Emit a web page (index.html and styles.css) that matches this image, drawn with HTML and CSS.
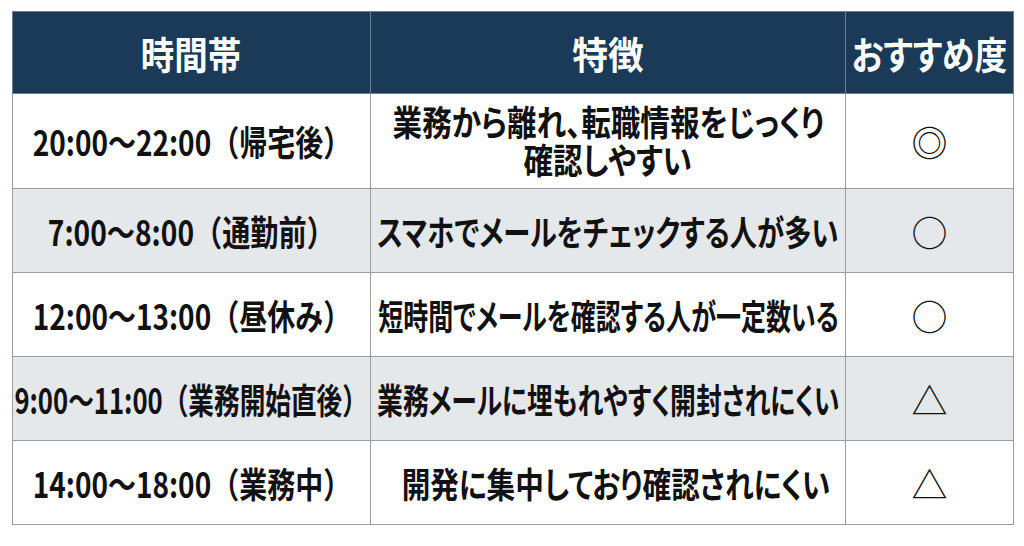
FILE: index.html
```html
<!DOCTYPE html>
<html lang="ja">
<head>
<meta charset="utf-8">
<link rel="stylesheet" href="styles.css">
</head>
<body>
<table class="tbl">
  <colgroup>
    <col class="c1"><col class="c2"><col class="c3">
  </colgroup>
  <thead>
    <tr>
      <th><div class="fit"><span class="tx" style="--sx:0.88">時間帯</span></div></th>
      <th><div class="fit"><span class="tx" style="--sx:0.94">特徴</span></div></th>
      <th><div class="fit"><span class="tx" style="--sx:0.86">おすすめ度</span></div></th>
    </tr>
  </thead>
  <tbody>
    <tr class="r1">
      <td class="time"><div class="fit"><span class="tx" style="--sx:0.80">20:00〜22:00（帰宅後）</span></div></td>
      <td class="desc"><div class="fit stack"><span class="tx ln" style="--sx:0.845">業務から離れ、転職情報をじっくり</span><span class="tx ln" style="--sx:0.845">確認しやすい</span></div></td>
      <td class="mark"><div class="fit"><span class="sym">◎</span></div></td>
    </tr>
    <tr class="alt">
      <td class="time"><div class="fit"><span class="tx" style="--sx:0.805">7:00〜8:00（通勤前）</span></div></td>
      <td class="desc"><div class="fit"><span class="tx" style="--sx:0.78">スマホでメールをチェックする人が多い</span></div></td>
      <td class="mark"><div class="fit"><span class="sym">○</span></div></td>
    </tr>
    <tr>
      <td class="time"><div class="fit"><span class="tx" style="--sx:0.80">12:00〜13:00（昼休み）</span></div></td>
      <td class="desc"><div class="fit"><span class="tx" style="--sx:0.714">短時間でメールを確認する人が一定数いる</span></div></td>
      <td class="mark"><div class="fit"><span class="sym">○</span></div></td>
    </tr>
    <tr class="alt">
      <td class="time"><div class="fit"><span class="tx" style="--sx:0.733">9:00〜11:00（業務開始直後）</span></div></td>
      <td class="desc"><div class="fit"><span class="tx" style="--sx:0.738">業務メールに埋もれやすく開封されにくい</span></div></td>
      <td class="mark"><div class="fit"><span class="sym">△</span></div></td>
    </tr>
    <tr>
      <td class="time"><div class="fit"><span class="tx" style="--sx:0.80">14:00〜18:00（業務中）</span></div></td>
      <td class="desc"><div class="fit shift"><span class="tx" style="--sx:0.818">開発に集中しており確認されにくい</span></div></td>
      <td class="mark"><div class="fit"><span class="sym">△</span></div></td>
    </tr>
  </tbody>
</table>
</body>
</html>
```

FILE: styles.css
```css
html, body {
  margin: 0;
  background: #ffffff;
}
body {
  padding: 11px 11px 0 12px;
  font-family: "Noto Sans CJK JP", "Noto Sans", sans-serif;
  color: #111111;
}
.tbl {
  border-collapse: collapse;
  width: 1001px;
  table-layout: fixed;
}
.c1 { width: 358px; }
.c2 { width: 475px; }
.c3 { width: 168px; }
.tbl th, .tbl td {
  border: 1px solid #9a9c9e;
  text-align: center;
  vertical-align: middle;
  padding: 0;
  overflow: visible;
}
.fit {
  display: flex;
  justify-content: center;
  align-items: center;
  white-space: nowrap;
}
.fit.stack {
  flex-direction: column;
  gap: 0;
  margin-top: -2px;
}
.fit.shift {
  padding-left: 16px;
}
.tx {
  display: inline-block;
  transform: scaleX(var(--sx, 1));
  transform-origin: center center;
  white-space: nowrap;
}
.tx.ln {
  display: block;
  height: 38px;
  line-height: 38px;
}
.tbl th {
  background: #1b3a57;
  color: #ffffff;
  font-size: 38px;
  font-weight: 700;
  height: 81px;
  border-color: #6f7f8e;
  font-feature-settings: "palt";
}
.tbl td {
  font-size: 35px;
  font-weight: 700;
  height: 83px;
  line-height: 40px;
}
.tbl td.desc {
  font-feature-settings: "palt";
}
.tbl tr.r1 td {
  height: 94px;
}
.tbl tr.alt td {
  background: #e5e8eb;
}
.sym {
  font-family: "Noto Sans CJK JP", sans-serif;
  font-weight: 400;
  font-size: 36px;
  line-height: 40px;
}
```
